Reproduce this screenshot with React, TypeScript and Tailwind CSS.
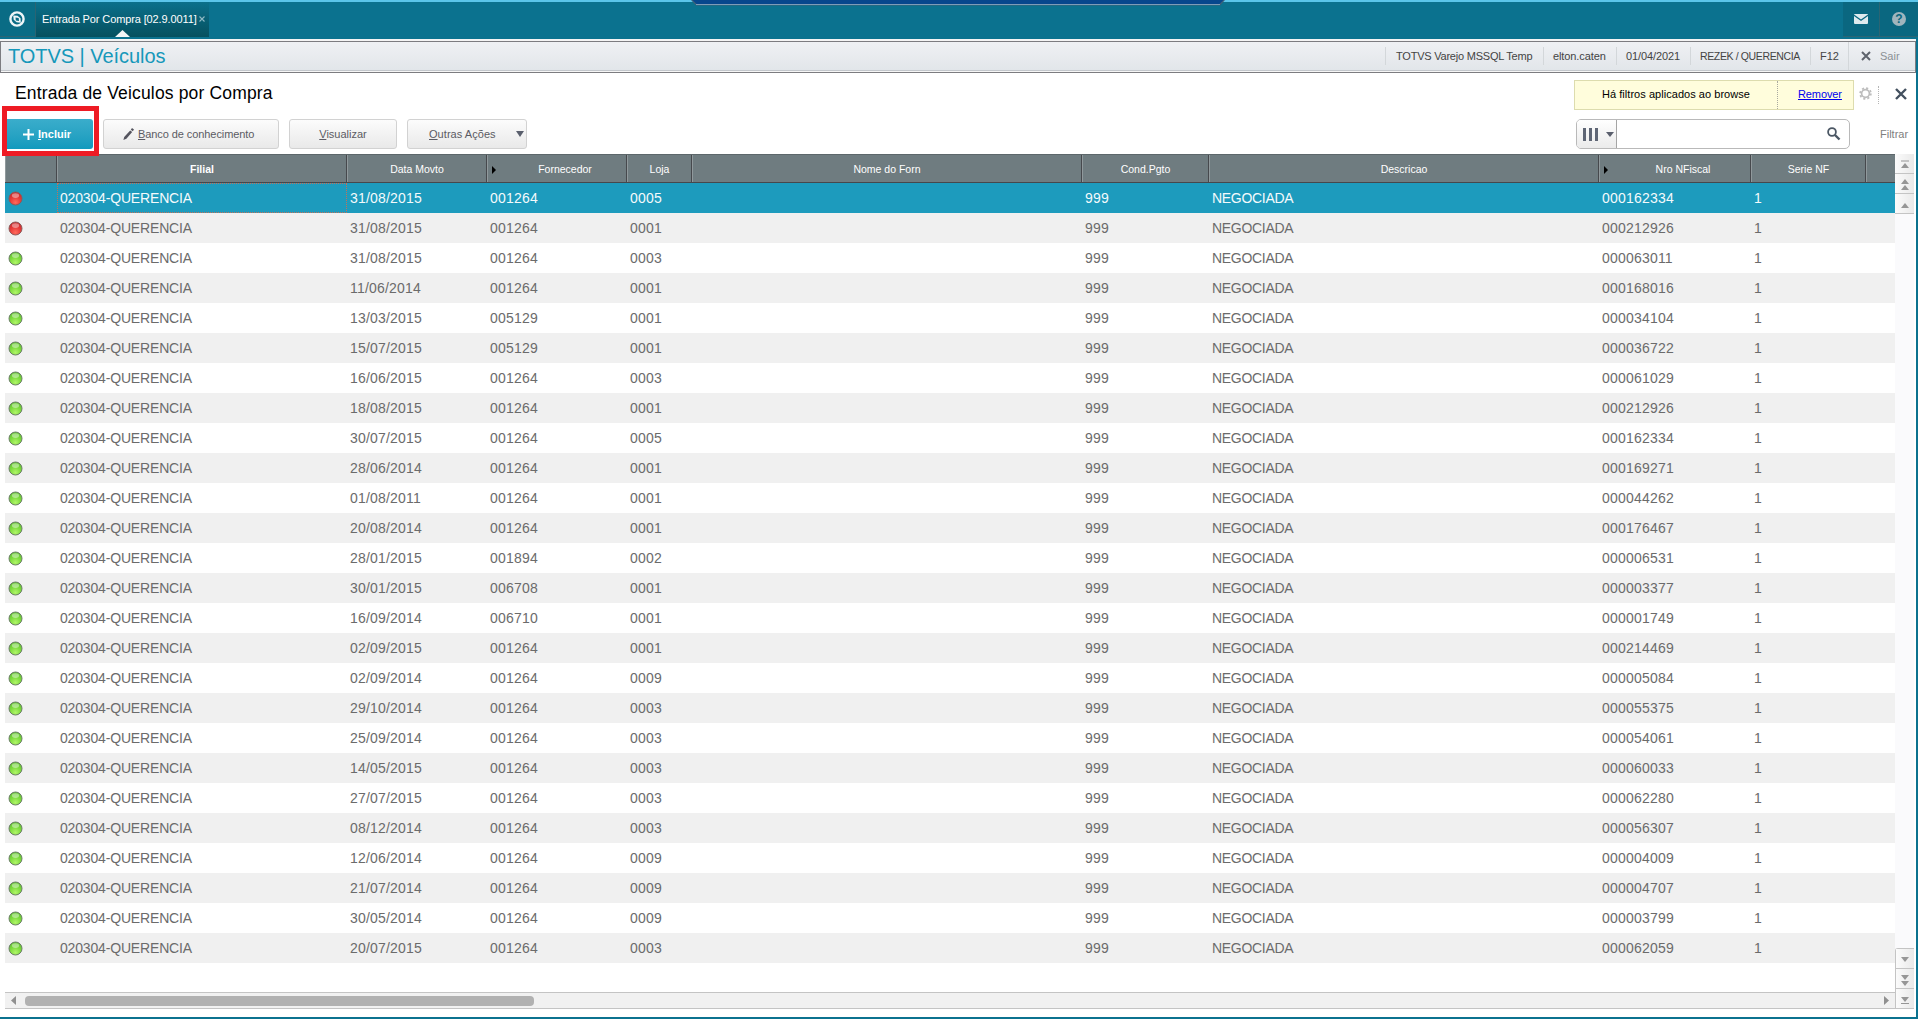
import { clsx } from 'clsx';

type Status = 'red' | 'green';

const columns = [
  { title: '', width: 'w-[52px]' },
  { title: 'Filial', width: 'w-[290px]', bold: true },
  { title: 'Data Movto', width: 'w-[140px]' },
  { title: 'Fornecedor', width: 'w-[140px]', arrow: true },
  { title: 'Loja', width: 'w-[65px]' },
  { title: 'Nome do Forn', width: 'w-[390px]' },
  { title: 'Cond.Pgto', width: 'w-[127px]' },
  { title: 'Descricao', width: 'w-[390px]' },
  { title: 'Nro NFiscal', width: 'w-[152px]', arrow: true },
  { title: 'Serie NF', width: 'w-[115px]' },
];

const rows: [Status, string, string, string, string][] = [
  ['red', '31/08/2015', '001264', '0005', '000162334'],
  ['red', '31/08/2015', '001264', '0001', '000212926'],
  ['green', '31/08/2015', '001264', '0003', '000063011'],
  ['green', '11/06/2014', '001264', '0001', '000168016'],
  ['green', '13/03/2015', '005129', '0001', '000034104'],
  ['green', '15/07/2015', '005129', '0001', '000036722'],
  ['green', '16/06/2015', '001264', '0003', '000061029'],
  ['green', '18/08/2015', '001264', '0001', '000212926'],
  ['green', '30/07/2015', '001264', '0005', '000162334'],
  ['green', '28/06/2014', '001264', '0001', '000169271'],
  ['green', '01/08/2011', '001264', '0001', '000044262'],
  ['green', '20/08/2014', '001264', '0001', '000176467'],
  ['green', '28/01/2015', '001894', '0002', '000006531'],
  ['green', '30/01/2015', '006708', '0001', '000003377'],
  ['green', '16/09/2014', '006710', '0001', '000001749'],
  ['green', '02/09/2015', '001264', '0001', '000214469'],
  ['green', '02/09/2014', '001264', '0009', '000005084'],
  ['green', '29/10/2014', '001264', '0003', '000055375'],
  ['green', '25/09/2014', '001264', '0003', '000054061'],
  ['green', '14/05/2015', '001264', '0003', '000060033'],
  ['green', '27/07/2015', '001264', '0003', '000062280'],
  ['green', '08/12/2014', '001264', '0003', '000056307'],
  ['green', '12/06/2014', '001264', '0009', '000004009'],
  ['green', '21/07/2014', '001264', '0009', '000004707'],
  ['green', '30/05/2014', '001264', '0009', '000003799'],
  ['green', '20/07/2015', '001264', '0003', '000062059'],
];

function StatusBall({ status }: { status: Status }) {
  return (
    <svg width="15" height="15" viewBox="0 0 15 15">
      <defs>
        <radialGradient id="ball-red" cx="50%" cy="80%" r="80%">
          <stop offset="0" stopColor="#ff6a5c" />
          <stop offset="0.5" stopColor="#e83c3a" />
          <stop offset="1" stopColor="#c42527" />
        </radialGradient>
        <radialGradient id="ball-green" cx="50%" cy="80%" r="80%">
          <stop offset="0" stopColor="#b0f668" />
          <stop offset="0.5" stopColor="#7fdc3f" />
          <stop offset="1" stopColor="#5cbd2c" />
        </radialGradient>
      </defs>
      <circle cx="7.5" cy="7.5" r="6.5" fill={`url(#ball-${status})`} stroke={status === 'red' ? '#8c5a5a' : '#6b7f66'} />
      <ellipse cx="7.5" cy="4.6" rx="3.6" ry="2.4" fill="#fff" opacity="0.4" />
    </svg>
  );
}

function TopBar() {
  return (
    <div className="relative flex h-[39px] shrink-0 justify-between border-t-2 border-[#5bc5ea] bg-[#0b728f]">
      <div className="flex h-[35px]">
        <div className="flex w-9 items-center justify-center border-r border-b border-[#2b6473] bg-[#0a6c85] pr-0.5">
          <svg width="16" height="16" viewBox="0 0 16 16" fill="none">
            <circle cx="8" cy="8" r="6.600" stroke="#eef6f8" strokeWidth="2.400" />
            <path d="M4.200 4.500L8.500 4.700 11.500 7.300 11.800 11.800 7.600 11.300 4.700 8.700z" fill="#eef6f8" />
            <path d="M6.500 6.500l3.200.4.300 3-3.200-.4z" fill="#0a6c85" />
          </svg>
        </div>
        <div className="relative flex w-[173px] items-center bg-linear-to-b from-[#0b708b] to-[#06505f] pl-[6px] text-[11px] text-white">
          <span className="w-[153px] whitespace-nowrap tracking-[-0.12px]">Entrada Por Compra [02.9.0011]</span>
          <svg className="-mt-0.5 ml-[4px]" width="6" height="6" viewBox="0 0 6 6" stroke="#8fb9c4" strokeWidth="1.1">
            <path d="M.5.5l5 5M5.500.5l-5 5" />
          </svg>
          <svg className="absolute bottom-0 left-[79px]" width="15" height="7" viewBox="0 0 15 7">
            <path d="M7.5 0L15 7H0z" fill="#f2f5f6" />
          </svg>
        </div>
      </div>
      <svg className="absolute -top-0.5 left-[691px]" width="534" height="6" viewBox="0 0 534 6">
        <path d="M0 0h534l-5 5.5H5z" fill="#3f5f78" />
        <path d="M1.5 0h531l-4 4H5.500z" fill="#07478d" />
        <path d="M5 4.500h524" stroke="#7e9cb8" />
      </svg>
      <div className="flex h-[35px]">
        <div className="flex w-[37px] items-center justify-center border-r border-b border-[#2b6473] bg-[#0a6780]">
          <svg width="14" height="10" viewBox="0 0 14 10">
            <rect width="14" height="10" rx="1" fill="#dfeaee" />
            <path d="M0 1.200l7 5 7-5" fill="none" stroke="#0a6780" strokeWidth="1.400" />
          </svg>
        </div>
        <div className="flex w-[38px] items-center justify-center border-b border-[#2b6473] bg-[#0a6780]">
          <span className="flex size-[14px] items-center justify-center rounded-full bg-[#a0b5bd] text-[12px] font-bold text-[#0a6780]">?</span>
        </div>
      </div>
    </div>
  );
}

function InfoBar() {
  return (
    <div className="flex h-[34px] shrink-0 flex-col border-r-2 border-[#0b728f] bg-[#f4f4f4] pt-0.5">
      <div className="flex h-[32px] items-stretch justify-between border border-[#7c7c80] bg-linear-to-b from-[#eff1f4] to-[#e1e5e9] shadow-[inset_0_-1px_0_#f6f6f6,inset_0_-2px_0_#c3c7cc]">
        <div className="pl-[7px] text-[20px] leading-[28px] tracking-[-0.05px] text-[#1698ba]">TOTVS | Veículos</div>
        <div className="mt-[5px] flex h-[18px] text-[11px] leading-[19px] whitespace-nowrap text-[#444]">
          <div className="w-[158px] border-l border-[#d3d7da] pl-[10px] tracking-[-0.22px]">TOTVS Varejo MSSQL Temp</div>
          <div className="w-[73px] border-l border-[#d3d7da] pl-[9px] tracking-[-0.1px]">elton.caten</div>
          <div className="w-[74px] border-l border-[#d3d7da] pl-[9px] tracking-[-0.1px]">01/04/2021</div>
          <div className="w-[120px] border-l border-[#d3d7da] pl-[9px] text-[10.5px] tracking-[-0.37px]">REZEK / QUERENCIA</div>
          <div className="w-[38px] border-l border-[#d3d7da] pl-[9px]">F12</div>
          <div className="-mt-[5px] flex h-[28px] w-[67px] items-center border-l border-[#d3d7da] pl-[12px] text-[#8b9095]">
            <svg className="mr-[9px]" width="10" height="10" viewBox="0 0 10 10" stroke="#5e636c" strokeWidth="2">
              <path d="M1 1l8 8M9 1L1 9" />
            </svg>
            Sair
          </div>
        </div>
      </div>
    </div>
  );
}

const buttonClass =
  'flex h-[30px] items-center rounded-[3px] border border-[#d2d2d2] bg-linear-to-b from-[#fcfcfc] to-[#e9e9e9] text-[11px] text-[#5b5b63]';

function Toolbar() {
  return (
    <div className="flex h-[81px] shrink-0 justify-between">
      <div className="relative pt-[8px] pl-[6px]">
        <h1 className="h-[38px] pl-[9px] text-[17.5px] leading-[25px] tracking-[0.16px] text-black">Entrada de Veiculos por Compra</h1>
        <div className="flex">
          <button className="mr-[10px] flex h-[30px] w-[87px] items-center rounded-r-[3px] bg-linear-to-b from-[#3aadcb] to-[#109abd] pl-[17px] text-[11px] font-bold text-white">
            <svg className="mr-[4px]" width="11" height="11" viewBox="0 0 11 11" stroke="#fff" strokeWidth="2">
              <path d="M5.500 0v11M0 5.500h11" />
            </svg>
            <span><u>I</u>ncluir</span>
          </button>
          <button className={clsx(buttonClass, 'mr-[10px] w-[176px] pl-[19px]')}>
            <svg className="mr-[4px]" width="11" height="12" viewBox="0 0 11 12" fill="#55555f">
              <path d="M9 0l2 1.500-1.200 1.700-2-1.500zM7.200 2.400l2 1.500L3.400 10.800.4 12l.8-3z" />
            </svg>
            <span className="tracking-[-0.08px]"><u>B</u>anco de conhecimento</span>
          </button>
          <button className={clsx(buttonClass, 'mr-[10px] w-[108px] justify-center')}>
            <span><u>V</u>isualizar</span>
          </button>
          <button className={clsx(buttonClass, 'w-[120px] justify-between pr-[2px] pl-[21px]')}>
            <span className="tracking-[0.05px]"><u>O</u>utras Ações</span>
            <svg width="8" height="6" viewBox="0 0 8 6" fill="#5a5f6d"><path d="M0 0h8L4 6z" /></svg>
          </button>
        </div>
        {/* highlight around the include button */}
        <div className="absolute top-[33px] left-[2px] h-[50px] w-[97px] border-[5px] border-[#ee1b24]" />
      </div>

      <div className="w-[342px] pt-[7px]">
        <div className="flex items-center">
          <div className="flex h-[30px] w-[280px] border border-[#dddcae] bg-[#fffddc] text-[11px] leading-[27px] text-black">
            <div className="w-[203px] border-r border-dotted border-[#a9a9a0] pl-[27px] tracking-[0.04px]">Há filtros aplicados ao browse</div>
            <a className="pl-[20px] tracking-[-0.1px] text-[#0000ee] underline">Remover</a>
          </div>
          <svg className="-mt-[3px] ml-[5px]" width="13" height="13" viewBox="0 0 13 13" fill="none" stroke="#bdbdbd">
            <circle cx="6.500" cy="6.500" r="3.900" strokeWidth="1.700" />
            <circle cx="6.500" cy="6.500" r="5.400" strokeWidth="1.700" strokeDasharray="2.120 2.120" />
          </svg>
          <div className="ml-[6px] h-[18px] border-l border-dotted border-[#b5b5b5]" />
          <svg className="-mt-[2px] ml-[16px]" width="12" height="12" viewBox="0 0 12 12" stroke="#43505f" strokeWidth="2.400">
            <path d="M1 1l10 10M11 1L1 11" />
          </svg>
        </div>
        <div className="mt-[9px] flex items-center pl-[2px]">
          <div className="flex h-[30px] w-[274px] overflow-hidden rounded-[5px] border border-[#b9b9b9] bg-white">
            <div className="flex w-10 items-center border-r border-[#a5a5a5] bg-linear-to-b from-white to-[#ebebeb] pl-[6px]">
              <svg width="15" height="13" viewBox="0 0 15 13" fill="#5f6675">
                <path d="M0 0h3v13H0zM6 0h3v13H6zM12 0h3v13h-3z" />
              </svg>
              <svg className="ml-[8px]" width="8" height="5" viewBox="0 0 8 5" fill="#5a5f6d"><path d="M0 0h8L4 5z" /></svg>
            </div>
            <svg className="mt-[7px] ml-[210px]" width="14" height="14" viewBox="0 0 14 14" fill="none" stroke="#4b5764">
              <circle cx="5" cy="5" r="3.900" strokeWidth="1.800" />
              <path d="M8 8l4.500 4.500" strokeWidth="2.400" />
            </svg>
          </div>
          <span className="ml-[30px] text-[11px] text-[#808080]">Filtrar</span>
        </div>
      </div>
    </div>
  );
}

function Grid() {
  return (
    <div className="w-[1890px]">
      <div className="flex h-[29px] border-t border-b border-t-[#5d676b] border-b-[#46484c] bg-[#6f7c80] text-[10.5px] text-white">
        {columns.map((c, i) => (
          <div
            key={i}
            className={clsx('flex items-center justify-center border-r border-l border-r-[#46494d] border-l-[#90999c] pt-[2px]', c.width, c.bold && 'font-bold')}
          >
            {c.arrow && (
              <svg className="ml-[4px] w-[4px]" width="4" height="8" viewBox="0 0 4 8"><path d="M0 0l4 4-4 4z" /></svg>
            )}
            <span className={clsx(c.arrow && 'flex-1 pl-[8px] text-center')}>{c.title}</span>
          </div>
        ))}
        <div className="flex-1 border-l border-[#90999c]" />
      </div>
      {rows.map(([status, date, supplier, store, invoice], i) => (
        <div
          key={i}
          className={clsx(
            'flex h-[30px] text-[14px] leading-[30px]',
            i === 0 ? 'bg-[#1d9bbd] text-[#f4fafc]' : 'text-[#6b6b6b]',
            i > 0 && i % 2 === 1 && 'bg-[#f0f0f0]',
          )}
        >
          <div className="flex w-[52px] items-center pl-[3px]"><StatusBall status={status} /></div>
          <div className={clsx('w-[290px] border border-dotted pl-[2px] leading-[28px] tracking-[-0.17px]', i === 0 ? 'border-[#c2715a]' : 'border-transparent')}>
            020304-QUERENCIA
          </div>
          <div className="w-[140px] pl-[3px] tracking-[0.2px]">{date}</div>
          <div className="w-[140px] pl-[3px] tracking-[0.2px]">{supplier}</div>
          <div className="w-[455px] pl-[3px] tracking-[0.2px]">{store}</div>
          <div className="w-[127px] pl-[3px] tracking-[0.2px]">999</div>
          <div className="w-[390px] pl-[3px] tracking-[-0.3px]">NEGOCIADA</div>
          <div className="w-[152px] pl-[3px] tracking-[0.2px]">{invoice}</div>
          <div className="pl-[3px]">1</div>
        </div>
      ))}
    </div>
  );
}

function ScrollButton({ d }: { d: string }) {
  return (
    <div className="flex h-5 items-center justify-center border-b border-[#c4c4c4] bg-linear-to-r from-[#fbfbfb] to-[#e9e9e9] pt-[2px]">
      <svg width="8" height="12" viewBox="0 0 8 12" fill="#969696"><path d={d} /></svg>
    </div>
  );
}

export default function App() {
  return (
    <div className="flex h-[1019px] w-[1918px] flex-col overflow-hidden bg-white font-['Liberation_Sans',Arial,sans-serif]">
      <TopBar />
      <InfoBar />
      <main className="flex flex-1 flex-col border-r-2 border-b-2 border-[#0b728f] bg-white">
        <Toolbar />
        <div className="flex h-[855px] pl-[5px]">
          <div className="flex flex-col justify-between">
            <Grid />
            <div className="flex h-[17px] w-[1890px] items-center border-t border-b border-[#c4c4c4] bg-[#f1f1f1] px-[6px]">
              <svg width="5" height="9" viewBox="0 0 5 9" fill="#909090"><path d="M5 0v9L0 4.500z" /></svg>
              <div className="ml-[9px] h-[10px] w-[509px] rounded-[4px] bg-[#b1b1b1]" />
              <svg className="ml-auto" width="5" height="9" viewBox="0 0 5 9" fill="#909090"><path d="M0 0v9l5-4.500z" /></svg>
            </div>
          </div>
          <div className="flex w-[19px] flex-col justify-between bg-[#fafafc]">
            <div>
              <ScrollButton d="M0 1.500h8v1H0zM4 4l4 5H0z" />
              <ScrollButton d="M4 0l4 5H0zM4 6l4 5H0z" />
              <ScrollButton d="M4 4l4 5H0z" />
            </div>
            <div className="rounded-tl-[3px] border-t border-l border-[#c4c4c4]">
              <ScrollButton d="M0 3h8L4 8z" />
              <ScrollButton d="M0 1h8L4 6zM0 7h8l-4 5z" />
              <ScrollButton d="M0 3h8L4 8zM0 9h8v1H0z" />
            </div>
          </div>
        </div>
      </main>
    </div>
  );
}
